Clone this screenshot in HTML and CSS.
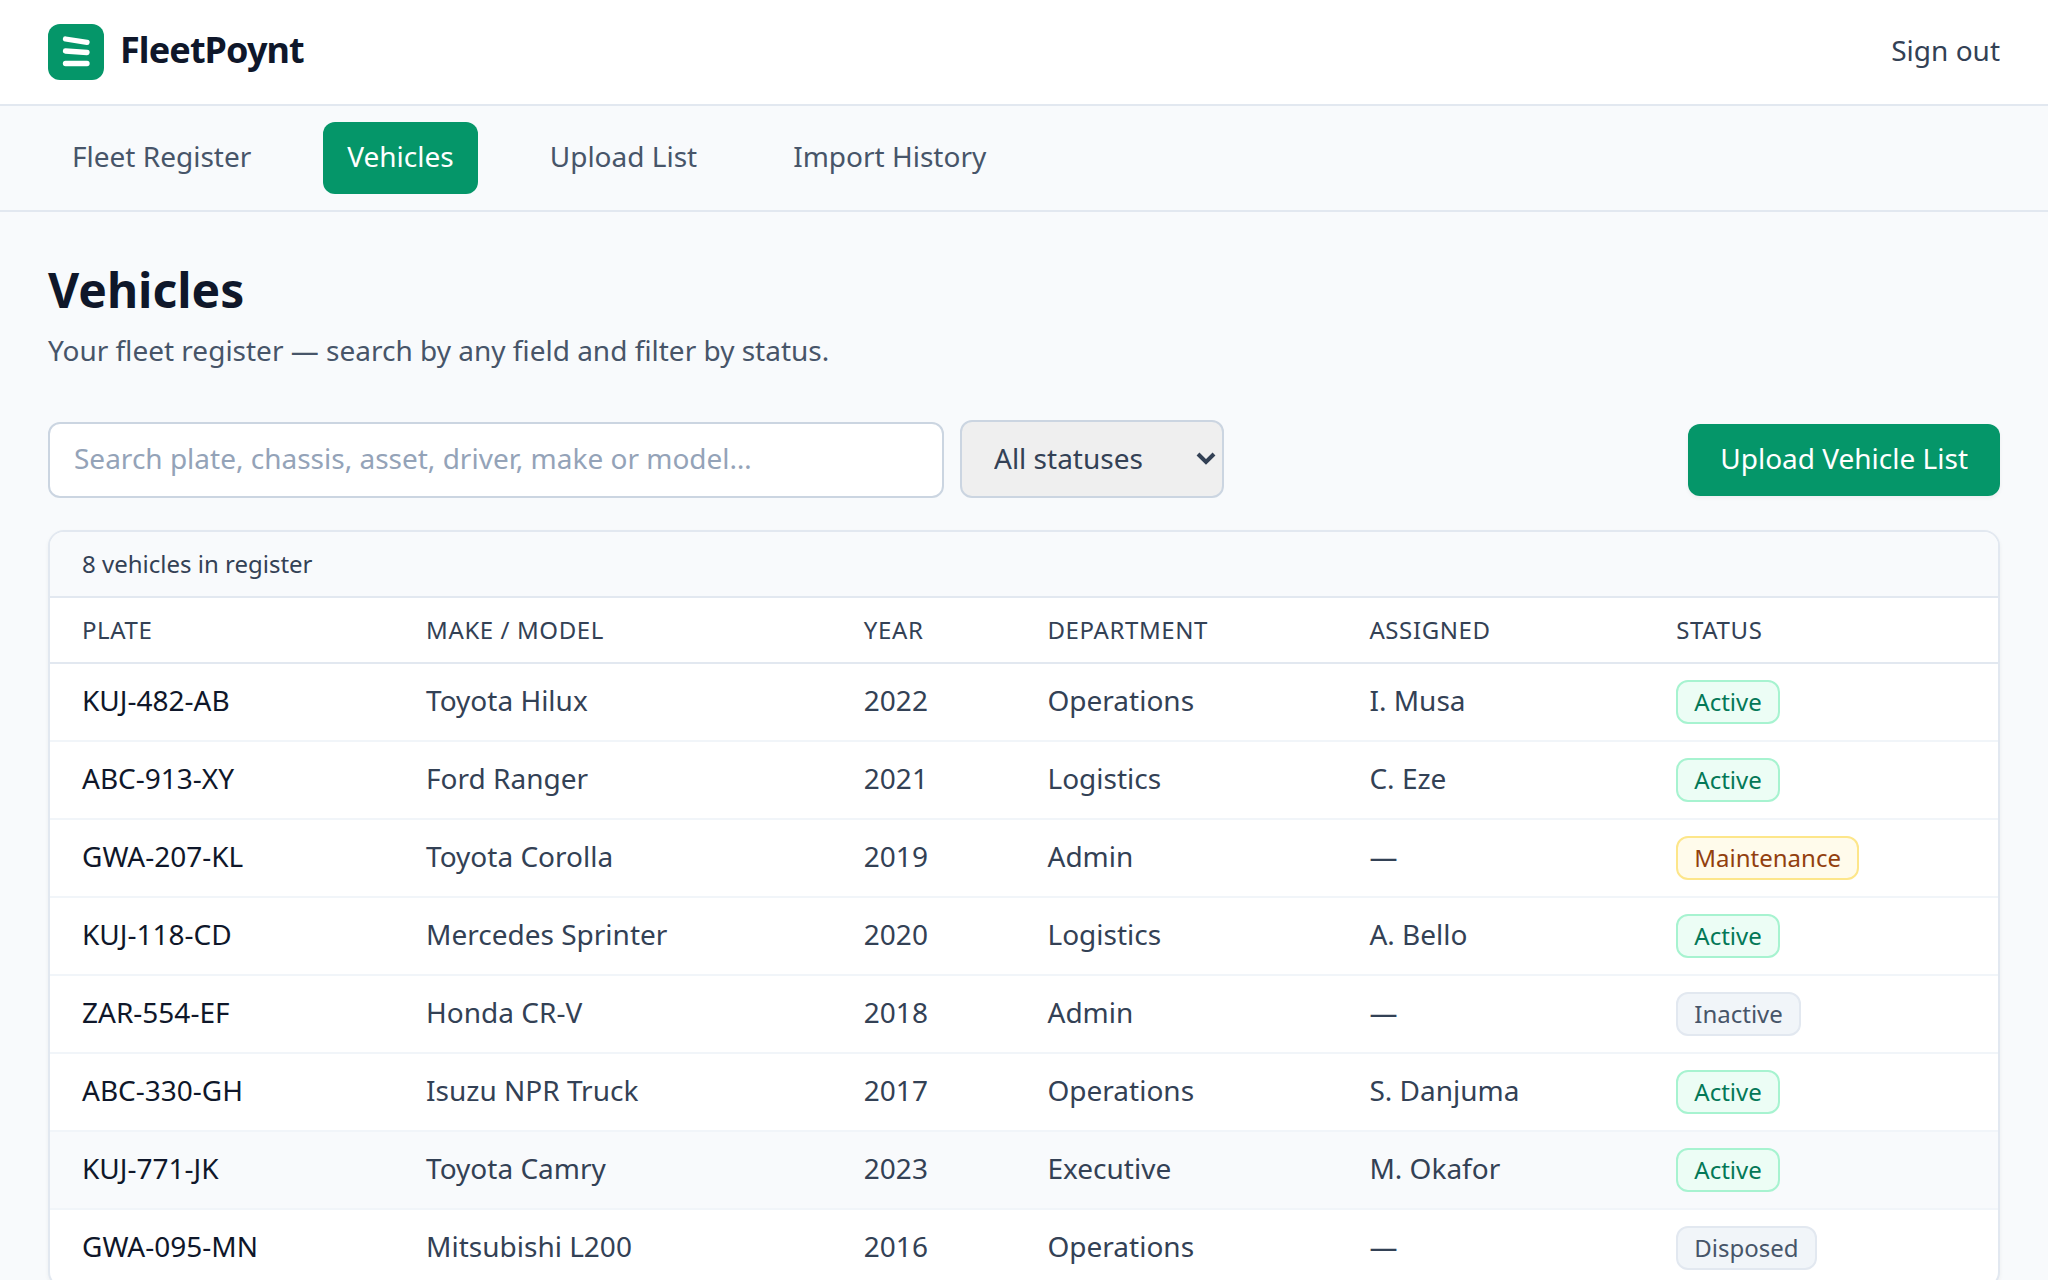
FILE: index.html
```html
<!DOCTYPE html>
<html lang="en">
<head>
  <meta charset="UTF-8">
  <meta name="viewport" content="width=device-width, initial-scale=1.0">
  <title>Vehicles - FleetPoynt</title>
  <link rel="stylesheet" href="styles.css">
</head>
<body>
  <header class="header">
    <a class="brand" href="#">
      <svg class="brand-logo" viewBox="0 0 56 56" aria-hidden="true">
        <rect width="56" height="56" rx="12" fill="#059669"/>
        <g stroke="#fff" stroke-width="5.300" stroke-linecap="round">
          <path d="M17.500 15L39 18.300"/>
          <path d="M17.500 27L39 28.500"/>
          <path d="M17.500 39.500H39"/>
        </g>
      </svg>
      <span class="brand-name">FleetPoynt</span>
    </a>
    <button type="button" class="sign-out">Sign out</button>
  </header>

  <nav class="nav">
    <a href="#">Fleet Register</a>
    <a href="#" class="active" aria-current="page">Vehicles</a>
    <a href="#">Upload List</a>
    <a href="#">Import History</a>
  </nav>

  <main class="main">
    <h1>Vehicles</h1>
    <p class="subtitle">Your fleet register — search by any field and filter by status.</p>

    <form class="toolbar">
      <input type="search" class="search" name="q" aria-label="Search vehicles" placeholder="Search plate, chassis, asset, driver, make or model…">
      <select class="status-filter" name="status" aria-label="Filter by status">
        <option value="">All statuses</option>
        <option value="active">Active</option>
        <option value="maintenance">Maintenance</option>
        <option value="inactive">Inactive</option>
        <option value="disposed">Disposed</option>
      </select>
      <button type="button" class="upload">Upload Vehicle List</button>
    </form>

    <section class="card">
      <p class="card-bar">8 vehicles in register</p>
      <table class="vehicles">
        <thead>
          <tr>
            <th>Plate</th>
            <th>Make / Model</th>
            <th>Year</th>
            <th>Department</th>
            <th>Assigned</th>
            <th>Status</th>
          </tr>
        </thead>
        <tbody>
          <tr>
            <td class="plate">KUJ-482-AB</td>
            <td>Toyota Hilux</td>
            <td>2022</td>
            <td>Operations</td>
            <td>I. Musa</td>
            <td><span class="badge badge-active">Active</span></td>
          </tr>
          <tr>
            <td class="plate">ABC-913-XY</td>
            <td>Ford Ranger</td>
            <td>2021</td>
            <td>Logistics</td>
            <td>C. Eze</td>
            <td><span class="badge badge-active">Active</span></td>
          </tr>
          <tr>
            <td class="plate">GWA-207-KL</td>
            <td>Toyota Corolla</td>
            <td>2019</td>
            <td>Admin</td>
            <td>—</td>
            <td><span class="badge badge-maintenance">Maintenance</span></td>
          </tr>
          <tr>
            <td class="plate">KUJ-118-CD</td>
            <td>Mercedes Sprinter</td>
            <td>2020</td>
            <td>Logistics</td>
            <td>A. Bello</td>
            <td><span class="badge badge-active">Active</span></td>
          </tr>
          <tr>
            <td class="plate">ZAR-554-EF</td>
            <td>Honda CR-V</td>
            <td>2018</td>
            <td>Admin</td>
            <td>—</td>
            <td><span class="badge">Inactive</span></td>
          </tr>
          <tr>
            <td class="plate">ABC-330-GH</td>
            <td>Isuzu NPR Truck</td>
            <td>2017</td>
            <td>Operations</td>
            <td>S. Danjuma</td>
            <td><span class="badge badge-active">Active</span></td>
          </tr>
          <tr class="highlight">
            <td class="plate">KUJ-771-JK</td>
            <td>Toyota Camry</td>
            <td>2023</td>
            <td>Executive</td>
            <td>M. Okafor</td>
            <td><span class="badge badge-active">Active</span></td>
          </tr>
          <tr>
            <td class="plate">GWA-095-MN</td>
            <td>Mitsubishi L200</td>
            <td>2016</td>
            <td>Operations</td>
            <td>—</td>
            <td><span class="badge">Disposed</span></td>
          </tr>
        </tbody>
      </table>
    </section>
  </main>
</body>
</html>
```
FILE: styles.css
```css
* {
  box-sizing: border-box;
}

body {
  margin: 0;
  font-family: "Noto Sans", sans-serif;
  font-size: 28px;
  line-height: 36px;
  color: #334155;
  background: #f8fafc;
}

a {
  color: inherit;
  text-decoration: none;
}

button, input, select {
  font: inherit;
  color: inherit;
}

/* Header */
.header {
  display: flex;
  align-items: center;
  justify-content: space-between;
  padding: 24px 48px;
  background: #fff;
  border-bottom: 2px solid #e2e8f0;
}

.brand {
  display: flex;
  align-items: center;
  gap: 16px;
}

.brand-logo {
  width: 56px;
  height: 56px;
}

.brand-name {
  font-size: 36px;
  line-height: 52px;
  padding-bottom: 4px;
  font-weight: 700;
  letter-spacing: -0.025em;
  color: #0f172a;
}

.sign-out {
  padding: 0 0 4px;
  border: none;
  background: none;
  cursor: pointer;
}

/* Navigation */
.nav {
  display: flex;
  gap: 48px;
  padding: 16px 48px;
  border-bottom: 2px solid #e2e8f0;
}

.nav a {
  padding: 16px 24px 20px;
  border-radius: 12px;
  color: #475569;
}

.nav a.active {
  background: #059669;
  color: #fff;
}

/* Page */
.main {
  padding: 48px;
}

h1 {
  margin: 0;
  font-size: 48px;
  line-height: 60px;
  font-weight: 700;
  color: #0f172a;
}

.subtitle {
  margin: 12px 0 52px;
  color: #475569;
}

.toolbar {
  display: flex;
  align-items: baseline;
  gap: 16px;
  margin-bottom: 32px;
}

.search {
  width: 896px;
  padding: 16px 24px 20px;
  border: 2px solid #cbd5e1;
  border-radius: 12px;
  background: #fff;
  appearance: none;
}

.search::placeholder {
  color: #94a3b8;
}

.status-filter {
  width: 264px;
  padding: 18px 48px 20px 32px;
  border: 2px solid #cbd5e1;
  border-radius: 12px;
  background: #efefef url("data:image/svg+xml,%3Csvg xmlns='http://www.w3.org/2000/svg' width='20' height='14' fill='none' stroke='%23334155' stroke-width='4'%3E%3Cpath d='M2 2l8 8 8-8'/%3E%3C/svg%3E") no-repeat right 6px center;
  appearance: none;
}

.upload {
  margin-left: auto;
  padding: 16px 32px 20px;
  border: none;
  border-radius: 12px;
  background: #059669;
  color: #fff;
  box-shadow: 0 2px 4px rgba(0, 0, 0, 0.05);
  cursor: pointer;
}

/* Table */
.card {
  overflow: hidden;
  background: #fff;
  border: 2px solid #e2e8f0;
  border-radius: 16px;
  box-shadow: 0 2px 4px rgba(0, 0, 0, 0.05);
}

.card-bar {
  margin: 0;
  padding: 16px 32px;
  font-size: 24px;
  line-height: 32px;
  background: #f8fafc;
  border-bottom: 2px solid #e2e8f0;
}

.vehicles {
  width: 100%;
  border-collapse: collapse;
  text-align: left;
}

.vehicles th {
  padding: 16px 32px;
  font-size: 24px;
  line-height: 32px;
  font-weight: 400;
  letter-spacing: 0.025em;
  text-transform: uppercase;
  border-bottom: 2px solid #e2e8f0;
}

.vehicles td {
  padding: 16px 32px;
  vertical-align: baseline;
  border-bottom: 2px solid #f1f5f9;
}

.vehicles tr:last-child td {
  border-bottom: none;
}

.vehicles .plate {
  color: #0f172a;
}

.vehicles .highlight {
  background: #f8fafc;
}

.badge {
  display: inline-block;
  padding: 4px 16px;
  font-size: 24px;
  line-height: 32px;
  border: 2px solid #e2e8f0;
  border-radius: 12px;
  background: #f1f5f9;
  color: #475569;
}

.badge-active {
  background: #ecfdf5;
  border-color: #a7f3d0;
  color: #047857;
}

.badge-maintenance {
  background: #fffbeb;
  border-color: #fde68a;
  color: #92400e;
}
```
